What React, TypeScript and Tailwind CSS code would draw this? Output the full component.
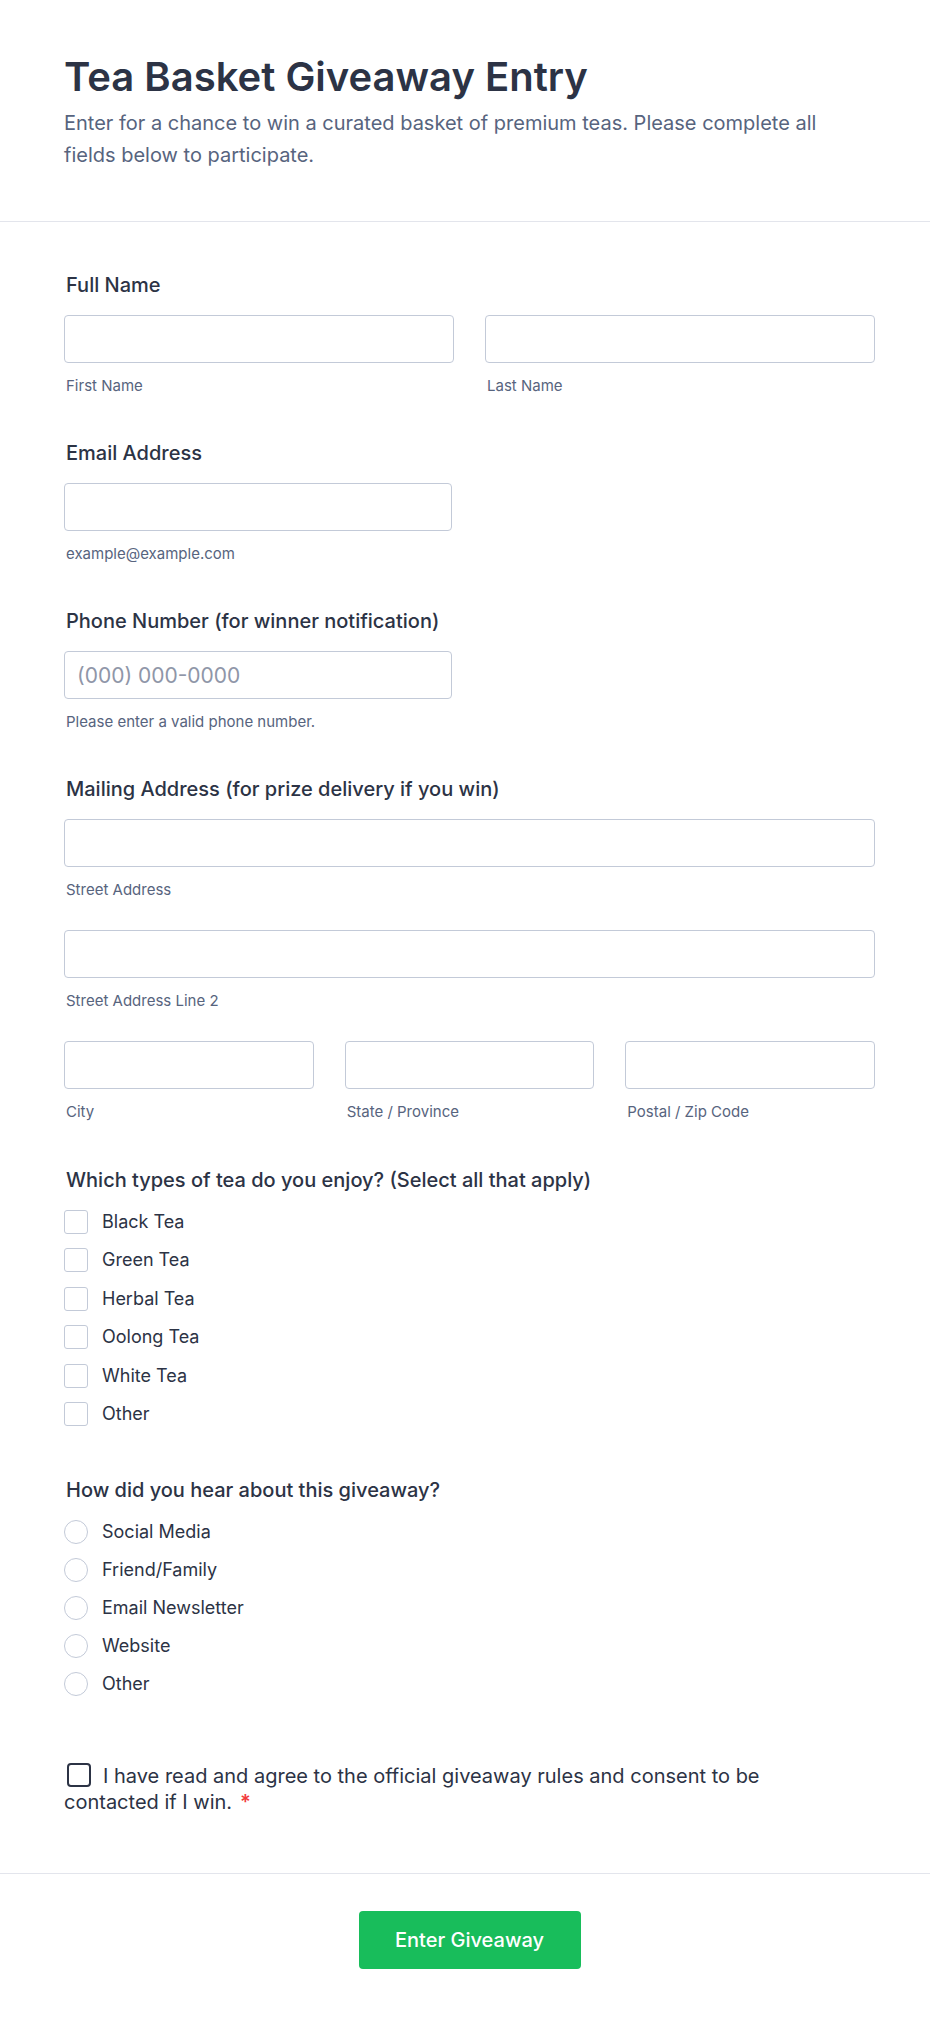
import React from 'react'

const font = "font-['Inter','Noto_Sans',sans-serif]"

function Field({
  label,
  children,
  className = '',
}: {
  label: string
  children: React.ReactNode
  className?: string
}) {
  return (
    <div className={className}>
      <div className="pl-[2px] text-xl leading-7 font-medium text-[#2c3345] mb-4">{label}</div>
      {children}
    </div>
  )
}

function TextBox({ sub, placeholder }: { sub?: string; placeholder?: string }) {
  return (
    <div>
      <input
        type="text"
        placeholder={placeholder}
        className="block w-full h-12 rounded-[4px] border border-[#c3cad8] bg-white px-3 text-[21px] text-[#2c3345] placeholder:text-[#8f96a8] outline-none"
      />
      {sub && <div className="mt-[13px] pl-[2px] text-[15px] leading-5 text-[#57647e]">{sub}</div>}
    </div>
  )
}

const teas = ['Black Tea', 'Green Tea', 'Herbal Tea', 'Oolong Tea', 'White Tea', 'Other']
const sources = ['Social Media', 'Friend/Family', 'Email Newsletter', 'Website', 'Other']

export default function App() {
  return (
    <div className={`${font} bg-white min-h-[2020px] w-full`}>
      {/* Header */}
      <div className="pl-16 pr-[55px] pt-[53px] pb-[50px] border-b border-[#e3e5ec]">
        <h1 className="text-[40px] leading-[48px] font-semibold text-[#2c3345]">
          Tea Basket Giveaway Entry
        </h1>
        <p className="mt-[6px] max-w-[790px] text-xl leading-8 text-[#57647e]">
          Enter for a chance to win a curated basket of premium teas. Please complete all
          fields below to participate.
        </p>
      </div>

      {/* Form body */}
      <div className="pl-16 pr-[55px] pt-[49px] pb-[58px] border-b border-[#e3e5ec] flex flex-col">
        <Field label="Full Name">
          <div className="grid grid-cols-2 gap-[31px]">
            <TextBox sub="First Name" />
            <TextBox sub="Last Name" />
          </div>
        </Field>

        <Field label="Email Address" className="mt-[43px]">
          <div className="w-[388px]">
            <TextBox sub="example@example.com" />
          </div>
        </Field>

        <Field label="Phone Number (for winner notification)" className="mt-[43px]">
          <div className="w-[388px]">
            <TextBox placeholder="(000) 000-0000" sub="Please enter a valid phone number." />
          </div>
        </Field>

        <Field label="Mailing Address (for prize delivery if you win)" className="mt-[43px]">
          <div className="flex flex-col gap-[30px]">
            <TextBox sub="Street Address" />
            <TextBox sub="Street Address Line 2" />
            <div className="grid grid-cols-3 gap-[31px]">
              <TextBox sub="City" />
              <TextBox sub="State / Province" />
              <TextBox sub="Postal / Zip Code" />
            </div>
          </div>
        </Field>

        {/* Tea types */}
        <div className="mt-[44px]">
          <div className="pl-[2px] text-xl leading-7 font-medium text-[#2c3345] mb-[16px]">
            Which types of tea do you enjoy? (Select all that apply)
          </div>
          <div className="flex flex-col gap-[14.4px]">
            {teas.map((t) => (
              <label key={t} className="flex items-center gap-[14px] h-6">
                <input
                  type="checkbox"
                  className="appearance-none w-6 h-6 shrink-0 rounded-[3px] border border-[#c3cad8] bg-white"
                />
                <span className="text-lg text-[#2c3345]">{t}</span>
              </label>
            ))}
          </div>
        </div>

        {/* Heard about */}
        <div className="mt-[50px]">
          <div className="pl-[2px] text-xl leading-7 font-medium text-[#2c3345] mb-4">
            How did you hear about this giveaway?
          </div>
          <div className="flex flex-col gap-[14px]">
            {sources.map((s) => (
              <label key={s} className="flex items-center gap-[14px] h-6">
                <input
                  type="radio"
                  name="source"
                  className="appearance-none w-6 h-6 shrink-0 rounded-full border border-[#c3cad8] bg-white"
                />
                <span className="text-lg text-[#2c3345]">{s}</span>
              </label>
            ))}
          </div>
        </div>

        {/* Consent */}
        <div className="mt-[67px] w-[740px] text-xl leading-[26px] text-[#2c3345]">
          <input
            type="checkbox"
            className="appearance-none inline-block align-[-4px] w-6 h-6 ml-[3px] mr-3 rounded-[4px] border-2 border-[#2c3345] bg-white"
          />
          I have read and agree to the official giveaway rules and consent to be contacted if I
          win.
          <span className="ml-2 text-[#f23a3c] font-semibold">*</span>
        </div>
      </div>

      {/* Footer */}
      <div className="flex justify-center pl-16 pr-[55px] pt-[37px] pb-[51px]">
        <button className="w-[222px] h-[58px] rounded-[4px] bg-[#18bd5b] text-xl font-medium text-white">
          Enter Giveaway
        </button>
      </div>
    </div>
  )
}
